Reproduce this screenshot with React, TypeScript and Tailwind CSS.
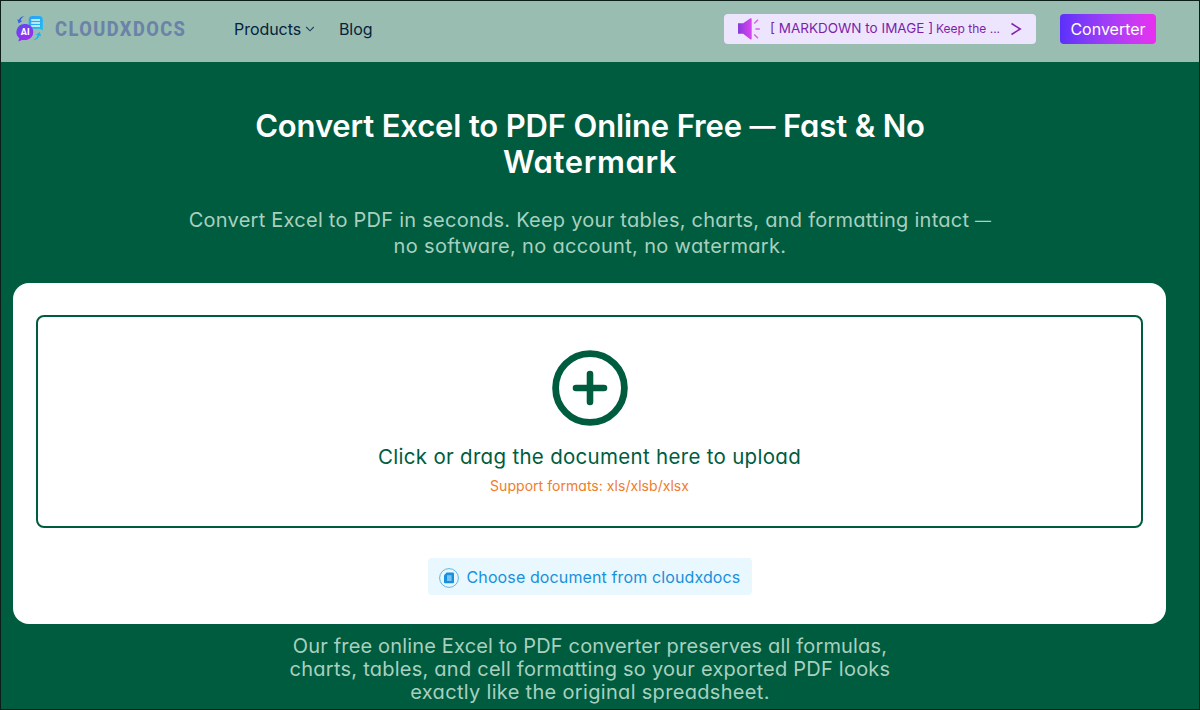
import React from "react";

function LogoIcon() {
  return (
    <svg className="h-7 w-7 shrink-0" viewBox="0 0 28 28" fill="none">
      <defs>
        <linearGradient id="logoDoc" x1="14" y1="0" x2="28" y2="14" gradientUnits="userSpaceOnUse">
          <stop stopColor="#2f9df8" />
          <stop offset="1" stopColor="#19bdf5" />
        </linearGradient>
        <linearGradient id="logoBubble" x1="4" y1="8" x2="14" y2="26" gradientUnits="userSpaceOnUse">
          <stop stopColor="#5a4cf5" />
          <stop offset="1" stopColor="#a626f2" />
        </linearGradient>
      </defs>
      <path d="M9.5 1.2C6.5 1.4 4.6 2.8 4 4.8L2.3 4.3L3.6 8.6L7.2 6L5.6 5.4C6 3.6 7.3 2.2 9.5 1.2Z" fill="#3b62e0" />
      <path d="M17.5 25.3C21 25.2 23.6 23.6 24.4 20.8L26.2 21.3L24.8 17L20.8 19.8L22.6 20.3C22 22.6 20.2 24.4 17.5 25.3Z" fill="#1cb5ee" />
      <path d="M17.5 1H24A3.8 3.8 0 0 1 27.8 4.8V15.5L24.8 13.8H17.5A3.8 3.8 0 0 1 13.7 10V4.8A3.8 3.8 0 0 1 17.5 1Z" fill="url(#logoDoc)" />
      <path d="M16.2 5H25M16.2 8H25M16.2 11H25" stroke="#e9faff" strokeWidth="1.3" />
      <path d="M9 9H11.5A8.1 8.1 0 0 1 11.5 25H7L3.4 26.6L4.2 23.2A8.1 8.1 0 0 1 9 9Z" fill="url(#logoBubble)" />
      <text x="10.2" y="20.3" textAnchor="middle" fill="#fff" fontFamily="Roboto, sans-serif" fontSize="9" fontWeight="800">
        AI
      </text>
    </svg>
  );
}

function SpeakerIcon() {
  return (
    <svg className="h-6 w-6 shrink-0" viewBox="0 0 24 24" fill="none">
      <defs>
        <linearGradient id="speaker" x1="0" y1="0" x2="15" y2="0" gradientUnits="userSpaceOnUse">
          <stop stopColor="#8038dc" />
          <stop offset="1" stopColor="#df45f0" />
        </linearGradient>
      </defs>
      <path d="M1 6.3H6.2L13.4 1.3Q14.7.7 14.7 2.4V21.6Q14.7 23.1 13.4 22.4L6.2 16.8H1Z" fill="url(#speaker)" />
      <path d="M17.3 6.6L21 2.8M18.5 12H22.8M17.3 17.4L21 21.2" stroke="#d85bea" strokeWidth="1.4" />
    </svg>
  );
}

function Header() {
  return (
    <header className="flex h-[61px] items-start bg-[#99bdb1] pl-[14px]">
      <a className="flex h-14 items-center">
        <LogoIcon />
        <span className="ml-3 w-[134px] origin-left scale-x-[0.87] whitespace-nowrap font-[Roboto,sans-serif] text-[21px] font-extrabold leading-none tracking-[1.65px] text-[#6b83a8]">
          CLOUDXDOCS
        </span>
      </a>
      <nav className="ml-[45px] flex h-14 items-center text-base text-[#07223d]">
        <a className="flex w-[105px] items-center">
          <span className="tracking-[-0.05px]">Products</span>
          <svg className="ml-[4px] h-2 w-2.5" viewBox="0 0 10 8" fill="none" stroke="#1d4260" strokeWidth="1.1">
            <path d="M1.2 2L5 5.8L8.8 2" />
          </svg>
        </a>
        <a className="tracking-[-0.1px]">Blog</a>
      </nav>
      <div className="ml-auto mr-[43px] mt-[13px] flex items-start">
        <a className="flex h-[30px] w-[312px] items-center rounded bg-[#ede5fe] pl-[13px] text-[#7c1fa8]">
          <SpeakerIcon />
          <span className="ml-[9px] w-[166px] whitespace-nowrap pb-0.5 text-[13.5px]">[ MARKDOWN to IMAGE ]</span>
          <span className="w-[66px] whitespace-nowrap pb-px text-xs">Keep the ...</span>
          <svg className="ml-[8px] h-3.5 w-3" viewBox="0 0 12 14" fill="none" stroke="#8322b0" strokeWidth="1.6">
            <path d="M1.5 1.5L10.2 7L1.5 12.5" />
          </svg>
        </a>
        <button
          type="button"
          className="ml-6 flex h-[30px] w-24 items-center justify-center rounded bg-gradient-to-r from-[#5b30fa] to-[#ea2df0] text-base text-white"
        >
          Converter
        </button>
      </div>
    </header>
  );
}

function UploadCard() {
  return (
    <section className="ml-3 h-[341px] w-[1153px] rounded-2xl bg-white px-[23px] pt-8 text-center">
      <div className="flex h-[213px] flex-col items-center rounded-lg border-2 border-[#005c3f] pt-[33px]">
        <svg className="h-[76px] w-[76px]" viewBox="0 0 76 76" fill="none" stroke="#005c3f">
          <circle cx="38" cy="38" r="34.4" strokeWidth="6.8" />
          <path d="M24 38H52M38 24V52" strokeWidth="6.6" strokeLinecap="round" />
        </svg>
        <p className="mt-4 whitespace-nowrap text-[20.5px] leading-[30px] tracking-[0.3px] text-[#005c3f]">
          Click or drag the document here to upload
        </p>
        <p className="mt-1 whitespace-nowrap text-[14px] leading-5 tracking-[0.04px] text-[#ef7d2b]">
          Support formats: xls/xlsb/xlsx
        </p>
      </div>
      <button
        type="button"
        className="mt-[30px] inline-flex h-[37px] w-[324px] items-center rounded bg-[#e9f7ff] pl-[11px] text-base text-[#1890dc]"
      >
        <svg className="mt-0.5 h-5 w-5" viewBox="0 0 20 20" fill="none">
          <circle cx="10" cy="10" r="9.4" stroke="#3da2e2" strokeWidth=".8" />
          <path d="M7.6 4.6H14A1 1 0 0 1 15 5.6V14.2A1 1 0 0 1 14 15.2H6A1 1 0 0 1 5 14.2V7.2Z" fill="#1890e0" />
          <path d="M8 7.2H12.6V13H8Z" fill="#79c3f2" />
        </svg>
        <span className="ml-2 whitespace-nowrap tracking-[0.12px]">Choose document from cloudxdocs</span>
      </button>
    </section>
  );
}

export default function App() {
  return (
    <div className="h-[710px] w-[1200px] overflow-hidden border border-[#0b1f18] bg-[#005c3f] font-[Inter,sans-serif] [font-feature-settings:'cv11']">
      <Header />
      <main>
        <div className="mr-[20px] h-[221px] pt-[46px] text-center">
          <h1 className="text-[31px] font-semibold leading-9 text-white">
            <span className="block tracking-[-0.15px]">
              Convert Excel to PDF Online Free <span className="align-[2px] text-[26px] leading-none">—</span> Fast &amp; No
            </span>
            <span className="block tracking-[0.6px]">Watermark</span>
          </h1>
          <p className="mt-[27px] text-[20px] leading-[26px] text-[#a9d0bf]">
            <span className="block tracking-[0.25px]">
              Convert Excel to PDF in seconds. Keep your tables, charts, and formatting intact{" "}
              <span className="align-[1px] text-[16px] leading-none">—</span>
            </span>
            <span className="block tracking-[0.34px]">no software, no account, no watermark.</span>
          </p>
        </div>
        <UploadCard />
        <p className="mr-[20px] mt-[11px] text-center text-[20px] leading-[23px] text-[#a9d0bf]">
          <span className="block tracking-[0.16px]">Our free online Excel to PDF converter preserves all formulas,</span>
          <span className="block tracking-[0.24px]">charts, tables, and cell formatting so your exported PDF looks</span>
          <span className="block tracking-[0.32px]">exactly like the original spreadsheet.</span>
        </p>
      </main>
    </div>
  );
}
